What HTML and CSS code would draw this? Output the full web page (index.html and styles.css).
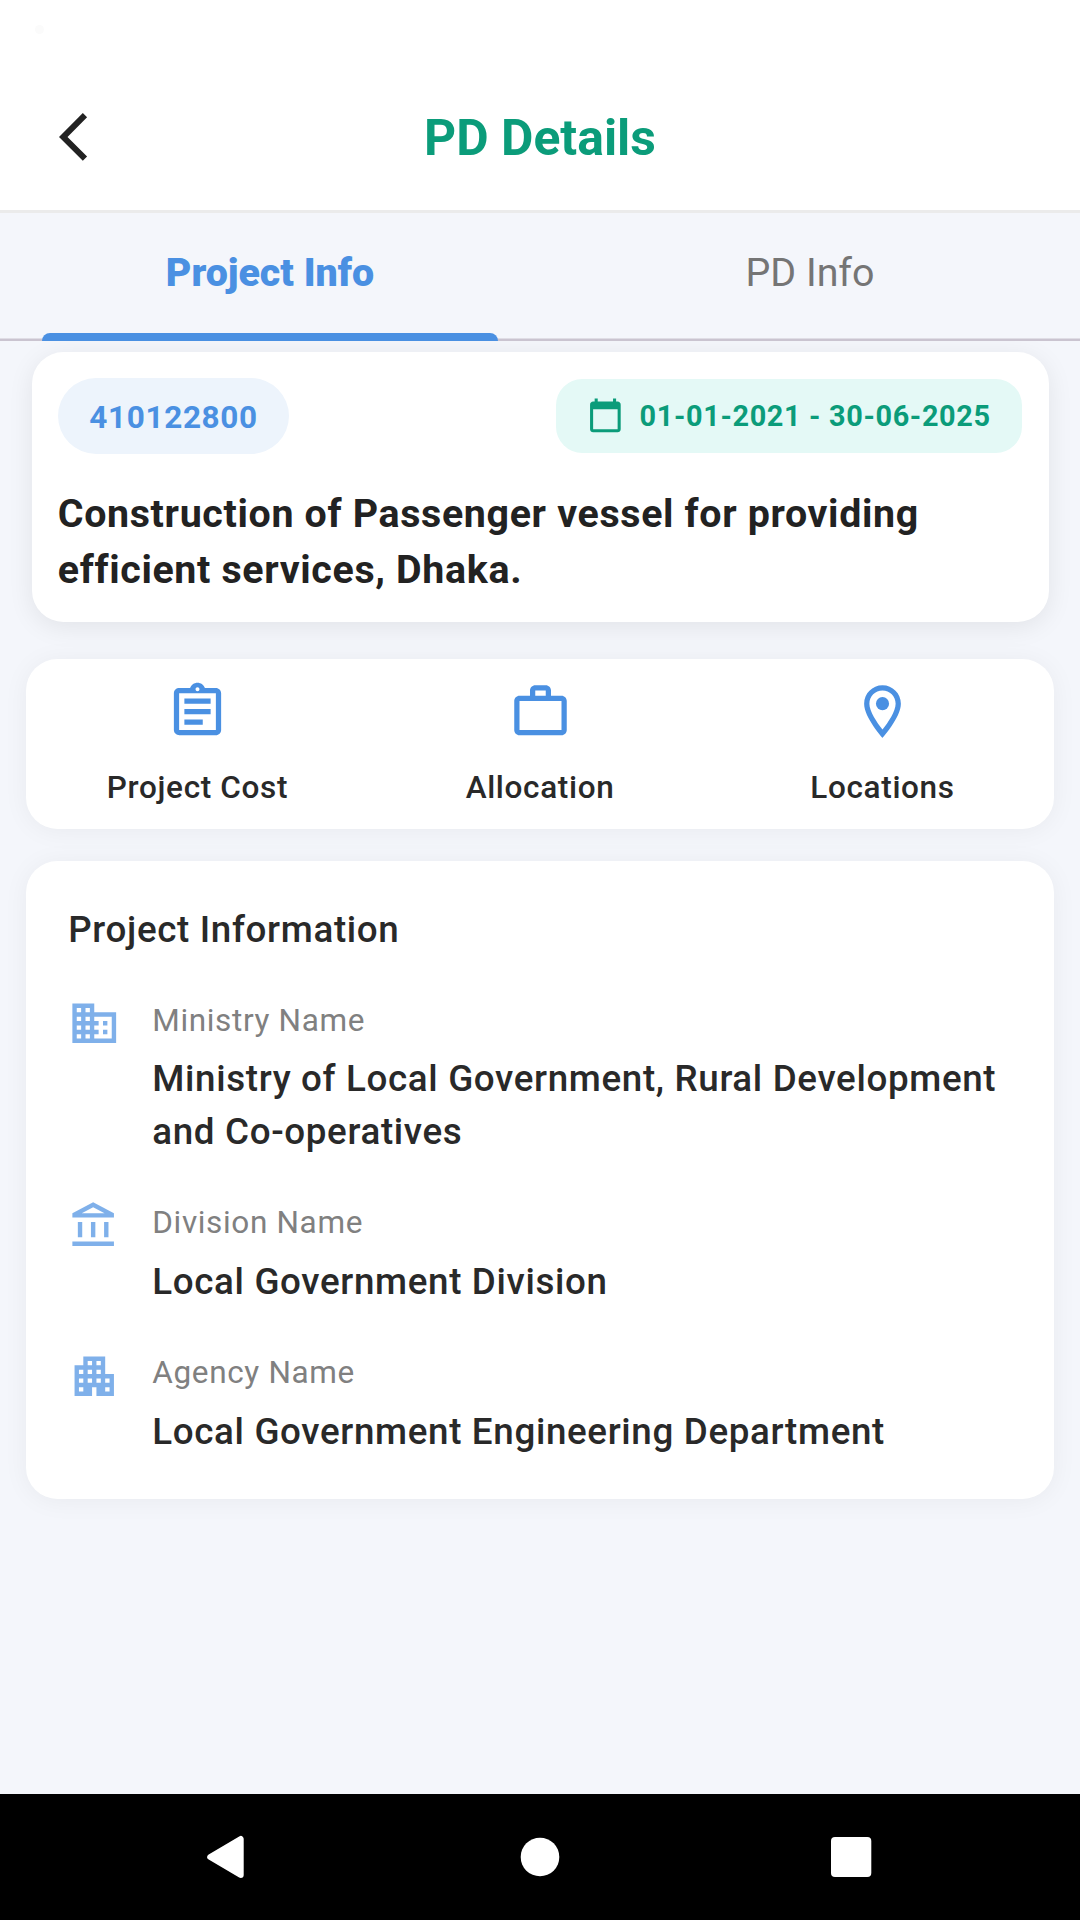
FILE: index.html
```html
<!DOCTYPE html>
<html lang="en">
<head>
<meta charset="utf-8">
<title>PD Details</title>
<link rel="stylesheet" href="styles.css">
</head>
<body>
<div class="screen">
  <header class="app-bar">
    <span class="status-dot"></span>
    <svg class="back" viewBox="0 0 24 24"><path d="M11.67 3.87L9.9 2.1 0 12l9.9 9.9 1.77-1.77L3.54 12z"/></svg>
    <h1 class="app-title">PD Details</h1>
  </header>
  <nav class="tabs">
    <div class="tab tab-active"><span class="tab-label">Project Info</span><span class="indicator"></span></div>
    <div class="tab"><span class="tab-label">PD Info</span></div>
  </nav>
  <main class="content">
    <section class="card summary">
      <div class="chips">
        <div class="chip chip-code">410122800</div>
        <div class="chip chip-date">
          <svg class="icon-cal" viewBox="0 0 24 24"><path d="M20 3h-1V1h-2v2H7V1H5v2H4c-1.1 0-2 .9-2 2v16c0 1.1.9 2 2 2h16c1.1 0 2-.9 2-2V5c0-1.1-.9-2-2-2zm0 18H4V8h16v13z"/></svg>
          <span>01-01-2021 - 30-06-2025</span>
        </div>
      </div>
      <h2 class="project-title">Construction of Passenger vessel for providing efficient services, Dhaka.</h2>
    </section>
    <section class="card actions">
      <div class="action">
        <svg class="icon-lg" viewBox="0 0 24 24"><path d="M7 15h7v2H7zm0-4h10v2H7zm0-4h10v2H7zm12-4h-4.180C14.4 1.84 13.3 1 12 1c-1.3 0-2.4.84-2.82 2H5c-.14 0-.27.01-.4.04-.39.08-.74.28-1.01.55-.18.18-.33.4-.43.64-.1.23-.16.49-.16.77v14c0 .27.06.54.16.78s.25.45.43.64c.27.27.62.47 1.01.55.13.02.26.03.4.03h14c1.1 0 2-.9 2-2V5c0-1.1-.9-2-2-2zm-7-.25c.41 0 .75.34.75.75s-.34.75-.75.75-.75-.34-.75-.75.34-.75.75-.75zM19 19H5V5h14v14z"/></svg>
        <span>Project Cost</span>
      </div>
      <div class="action">
        <svg class="icon-lg" viewBox="0 0 24 24"><path fill-rule="evenodd" d="M14 6V4h-4v2h4zM4 8v11h16V8H4zm16-2c1.11 0 2 .89 2 2v11c0 1.11-.89 2-2 2H4c-1.11 0-2-.89-2-2V8c0-1.11.89-2 2-2h4V4c0-1.11.89-2 2-2h4c1.11 0 2 .89 2 2v2h4z"/></svg>
        <span>Allocation</span>
      </div>
      <div class="action">
        <svg class="icon-lg" viewBox="0 0 24 24"><path d="M12 2C8.13 2 5 5.13 5 9c0 5.25 7 13 7 13s7-7.75 7-13c0-3.87-3.13-7-7-7zM7 9c0-2.76 2.24-5 5-5s5 2.24 5 5c0 2.88-2.88 7.19-5 9.88C9.92 16.21 7 11.85 7 9z"/><circle cx="12" cy="9" r="2.5"/></svg>
        <span>Locations</span>
      </div>
    </section>
    <section class="card info">
      <h3 class="info-title">Project Information</h3>
      <div class="row">
        <svg class="icon-md" viewBox="0 0 24 24"><path d="M12 7V3H2v18h20V7H12zM6 19H4v-2h2v2zm0-4H4v-2h2v2zm0-4H4V9h2v2zm0-4H4V5h2v2zm4 12H8v-2h2v2zm0-4H8v-2h2v2zm0-4H8V9h2v2zm0-4H8V5h2v2zm10 12h-8v-2h2v-2h-2v-2h2v-2h-2V9h8v10zm-2-8h-2v2h2v-2zm0 4h-2v2h2v-2z"/></svg>
        <div class="field">
          <div class="label">Ministry Name</div>
          <div class="value">Ministry of Local Government, Rural Development and Co-operatives</div>
        </div>
      </div>
      <div class="row">
        <svg class="icon-md" viewBox="0 0 24 24"><path d="M6.5 10h-2v7h2v-7zm6 0h-2v7h2v-7zm8.5 9H2v2h19v-2zm-2.5-9h-2v7h2v-7zm-7-6.740L16.710 6H6.290l5.210-2.740m0-2.260L2 6v2h19V6l-9.500-5z"/></svg>
        <div class="field">
          <div class="label">Division Name</div>
          <div class="value">Local Government Division</div>
        </div>
      </div>
      <div class="row">
        <svg class="icon-md" viewBox="0 0 24 24"><path d="M17 11V3H7v4H3v14h8v-4h2v4h8V11h-4zM7 19H5v-2h2v2zm0-4H5v-2h2v2zm0-4H5V9h2v2zm4 4H9v-2h2v2zm0-4H9V9h2v2zm0-4H9V5h2v2zm4 8h-2v-2h2v2zm0-4h-2V9h2v2zm0-4h-2V5h2v2zm4 12h-2v-2h2v2zm0-4h-2v-2h2v2z"/></svg>
        <div class="field">
          <div class="label">Agency Name</div>
          <div class="value">Local Government Engineering Department</div>
        </div>
      </div>
    </section>
  </main>
  <footer class="system-nav">
    <svg class="nav-shapes" viewBox="0 0 1080 126">
      <path class="nav-back" d="M210.200 63L240.700 45V81Z"/>
      <circle cx="540" cy="63" r="19.300"/>
      <rect x="831" y="43" width="40.300" height="40" rx="4"/>
    </svg>
  </footer>
</div>
</body>
</html>
```
FILE: styles.css
```css
* { box-sizing: border-box; }
body {
  margin: 0;
  font-family: Roboto, "Noto Sans", sans-serif;
  color: #292929;
}
h1, h2, h3 { margin: 0; }
svg { display: block; flex: none; }

.screen {
  width: 1080px;
  height: 1920px;
  display: flex;
  flex-direction: column;
  background: #f4f6fb;
  overflow: hidden;
}

/* App bar */
.app-bar {
  position: relative;
  flex: none;
  height: 213px;
  padding: 63px 59px 0;
  display: grid;
  grid-template-columns: 58px 1fr 58px;
  align-items: center;
  background: #fff;
  border-bottom: 3px solid #ebebeb;
}
.status-dot {
  position: absolute;
  left: 35px;
  top: 25px;
  width: 9px;
  height: 9px;
  border-radius: 50%;
  background: #fbfbfb;
}
.back { width: 57.75px; height: 57.75px; fill: #222; }
.app-title {
  padding-top: 2px;
  text-align: center;
  font-size: 49.875px;
  font-weight: 700;
  color: #0b9c7a;
}

/* Tabs */
.tabs {
  flex: none;
  height: 128px;
  display: grid;
  grid-template-columns: 1fr 1fr;
  box-shadow: inset 0 -2.600px #cac4d0;
}
.tab {
  margin: 0 42px;
  display: flex;
  flex-direction: column;
  font-size: 39.375px;
  color: #757575;
}
.tab-label {
  height: 120px;
  line-height: 120px;
  text-align: center;
}
.tab-active { font-weight: 900; color: #4a90e2; }
.indicator {
  height: 8px;
  border-radius: 8px 8px 0 0;
  background: #4a90e2;
}

/* Content */
.content {
  flex: 1;
  min-height: 0;
  padding: 10.500px 26.250px 0;
  overflow: hidden;
  letter-spacing: 0.656px;
}
.card { background: #fff; border-radius: 31.500px; }

.summary {
  margin: 0 5.250px 36.500px;
  height: 270.700px;
  padding: 26.250px;
  box-shadow: 0 5px 26px rgba(0, 0, 0, 0.08);
}
.chips {
  display: flex;
  align-items: center;
  justify-content: space-between;
  margin-bottom: 31.500px;
}
.chip { display: flex; align-items: center; padding: 0 31.500px; font-weight: 700; }
.chip-code {
  height: 76.300px;
  padding-top: 3px;
  border-radius: 39px;
  background: #edf4fc;
  color: #4a90e2;
  font-size: 31.500px;
}
.chip-date {
  height: 73.700px;
  gap: 15.750px;
  border-radius: 26.250px;
  background: #e4f9f6;
  color: #0b9c7a;
  font-size: 28.875px;
}
.icon-cal { width: 36.750px; height: 36.750px; margin-bottom: 1px; fill: #0b9c7a; }
.project-title {
  font-size: 39.375px;
  line-height: 56.250px;
  font-weight: 700;
  color: #222;
}

.actions {
  height: 170.500px;
  margin-bottom: 31.500px;
  padding: 21px 0;
  display: grid;
  grid-template-columns: repeat(3, 1fr);
  box-shadow: 0 2px 26px rgba(0, 0, 0, 0.05);
}
.action {
  display: flex;
  flex-direction: column;
  align-items: center;
  gap: 22px;
  font-size: 31.500px;
  line-height: 45px;
  font-weight: 500;
}
.icon-lg { width: 63px; height: 63px; fill: #4a90e2; }

.info {
  height: 638px;
  padding: 42px;
  display: flex;
  flex-direction: column;
  gap: 42px;
  box-shadow: 0 2px 26px rgba(0, 0, 0, 0.05);
}
.info-title { padding-top: 1px; margin-bottom: -1px; font-size: 36.750px; line-height: 52.500px; font-weight: 500; }
.row { display: flex; gap: 31.500px; }
.icon-md { width: 52.500px; height: 52.500px; fill: #4a90e2; opacity: 0.7; }
.field { padding-top: 0.800px; margin-bottom: -0.800px; }
.label {
  margin-bottom: 10.500px;
  font-size: 31.500px;
  line-height: 45px;
  color: #808080;
}
.value { font-size: 36.750px; line-height: 52.500px; font-weight: 500; }

/* System navigation */
.system-nav { flex: none; height: 126px; background: #000; }
.nav-shapes { width: 1080px; height: 126px; fill: #fff; }
.nav-back { stroke: #fff; stroke-width: 6px; stroke-linejoin: round; }
```
